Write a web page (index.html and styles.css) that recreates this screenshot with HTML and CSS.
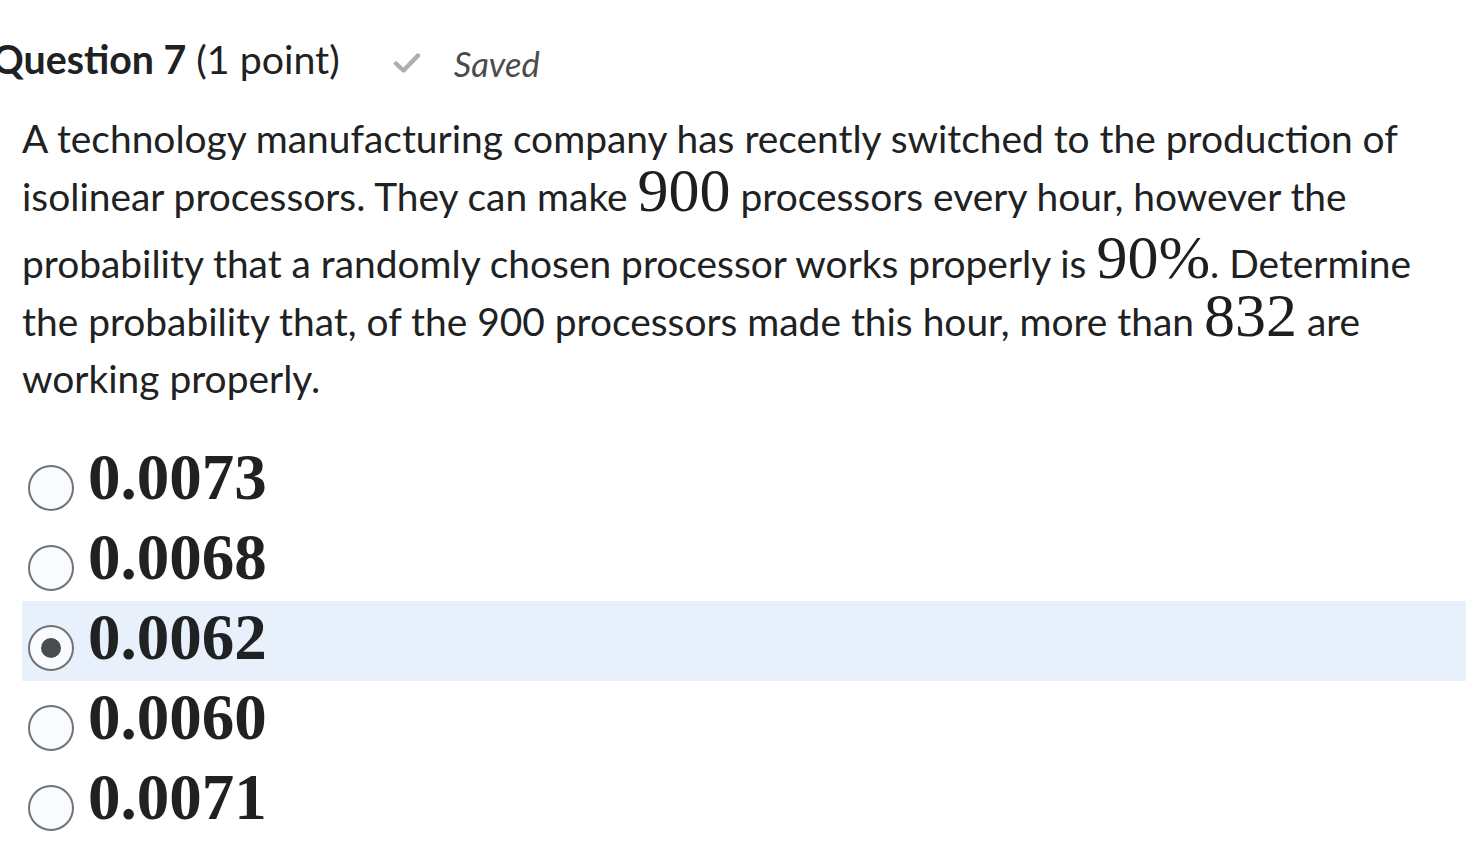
FILE: index.html
```html
<!DOCTYPE html>
<html lang="en">
<head>
<meta charset="utf-8">
<title>Question 7</title>
<link rel="stylesheet" href="styles.css">
</head>
<body>
<div class="question">
  <div class="q-header">
    <h2 class="q-title"><strong>Question 7</strong> (1 point)</h2>
    <span class="saved">
      <svg class="check" viewBox="0 0 28 22" width="28" height="22" aria-hidden="true">
        <path d="M3 11.5 L10.5 18.5 L25 3.5" fill="none" stroke="#a8afb5" stroke-width="4.4" stroke-linecap="round" stroke-linejoin="round"/>
      </svg>
      <em>Saved</em>
    </span>
  </div>
  <p class="q-text">A technology manufacturing company has recently switched to the production of isolinear processors. They can make <span class="math">900</span> processors every hour, however the probability that a randomly chosen processor works properly is <span class="math tall">90%</span>. Determine the probability that, of the 900 processors made this hour, more than <span class="math">832</span> are working properly.</p>
  <ul class="choices">
    <li class="choice"><span class="radio"></span><span class="ans">0.0073</span></li>
    <li class="choice"><span class="radio"></span><span class="ans">0.0068</span></li>
    <li class="choice selected"><span class="radio checked"></span><span class="ans">0.0062</span></li>
    <li class="choice"><span class="radio"></span><span class="ans">0.0060</span></li>
    <li class="choice"><span class="radio"></span><span class="ans">0.0071</span></li>
  </ul>
</div>
</body>
</html>
```

FILE: styles.css
```css
html, body {
  margin: 0;
  padding: 0;
  background: #ffffff;
}
body {
  font-family: Lato, "Noto Sans", sans-serif;
  color: #202122;
  overflow: hidden;
}
.question {
  padding: 0 0 0 22px;
}
.q-header {
  display: flex;
  align-items: baseline;
  margin-left: -30px;
  padding-top: 37px;
  height: 49px;
}
.q-title {
  margin: 0;
  font-size: 39.3px;
  font-weight: 400;
  line-height: 44px;
}
.q-title strong {
  font-weight: 700;
}
.saved {
  display: inline-flex;
  align-items: center;
  margin-left: 53px;
  color: #494c4e;
  font-size: 34.5px;
}
.check {
  margin-right: 33px;
}
.saved em {
  font-style: italic;
}
.q-text {
  margin: 24px 0 0 0;
  width: 1422px;
  font-size: 38.9px;
  line-height: 57px;
}
.math {
  font-family: "Liberation Serif", "Times New Roman", serif;
  font-size: 62px;
  line-height: 46px;
  color: #1d1e1f;
}
.math.tall {
  line-height: 65px;
}
.choices {
  list-style: none;
  margin: 34px 0 0 0;
  padding: 0;
}
.choice {
  display: flex;
  align-items: center;
  height: 80px;
}
.choice.selected {
  background: #e8f0fb;
}
.radio {
  box-sizing: border-box;
  width: 46px;
  height: 46px;
  margin: 14px 0 0 6px;
  border: 2px solid #6e7376;
  border-radius: 50%;
  background: #f9fbff;
  display: flex;
  align-items: center;
  justify-content: center;
}
.radio.checked::after {
  content: "";
  width: 20px;
  height: 20px;
  border-radius: 50%;
  background: #494c4e;
}
.ans {
  margin: -7px 0 0 14px;
  font-family: "Liberation Serif", "Times New Roman", serif;
  font-weight: 700;
  font-size: 65px;
  line-height: 1;
}
```
